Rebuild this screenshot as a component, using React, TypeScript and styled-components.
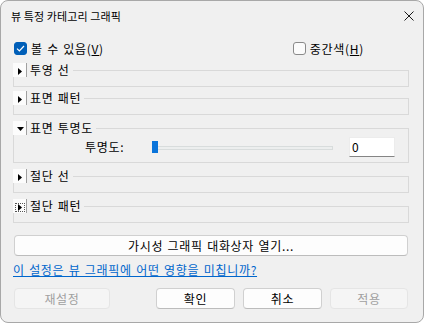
import React from 'react'
import styled, {createGlobalStyle} from 'styled-components'

const GlobalStyle = createGlobalStyle`
  html, body {
    margin: 0;
    padding: 0;
    background: #ffffff;
  }
  body {
    font-family: "Noto Sans CJK KR", "Noto Sans", sans-serif;
  }
`

const Window = styled.div`
  width: 424px;
  height: 323px;
  box-sizing: border-box;
  border: 1px solid #a8a8a8;
  border-radius: 8px;
  background: #f0f0f0;
  overflow: hidden;
  display: flex;
  flex-direction: column;
  font-family: "Noto Sans CJK KR", "Noto Sans", sans-serif;
  font-size: 12px;
  letter-spacing: 0.7px;
  word-spacing: 1px;
  color: #000;
`

const TitleBar = styled.div`
  height: 29px;
  flex: none;
  display: flex;
  align-items: center;
  justify-content: space-between;
  padding: 0 9px 0 10px;
`

const Title = styled.span`
  font-size: 11px;
  letter-spacing: 0.1px;
  word-spacing: 0;
  line-height: 14px;
`

const Body = styled.div`
  display: flex;
  flex-direction: column;
  padding: 0 14px 0 12px;
`

const TopRow = styled.div`
  display: flex;
  align-items: center;
  height: 13px;
  margin-top: 12px;
  padding-right: 45px;
`

const CheckLabel = styled.label<{$right?: boolean}>`
  display: flex;
  align-items: center;
  gap: 4px;
  line-height: 14px;
  margin-left: ${p => (p.$right ? 'auto' : '1px')};
`

const Box = styled.span<{$checked?: boolean}>`
  width: 13px;
  height: 13px;
  box-sizing: border-box;
  border-radius: 3px;
  display: flex;
  align-items: center;
  justify-content: center;
  background: ${p => (p.$checked ? '#005fb8' : '#fbfbfb')};
  border: 1px solid ${p => (p.$checked ? '#005fb8' : '#8a8a8a')};
`

const U = styled.span`
  text-decoration: underline;
`

const Group = styled.fieldset<{$gap: number}>`
  margin: ${p => p.$gap}px 0 0;
  padding: 0;
  min-width: 0;
  border: 1px solid #d9d9d9;
`

const Legend = styled.legend`
  margin-left: -1px;
  padding: 0 3px 0 0;
  height: 14px;
  display: flex;
  align-items: center;
  gap: 3px;
  line-height: 14px;
`

const Expander = styled.span`
  width: 14px;
  height: 14px;
  box-sizing: border-box;
  display: flex;
  align-items: center;
  justify-content: center;
  padding-left: 1px;
  background: #fcfcfc;
  border-right: 1px solid #a0a0a0;
`

const FocusRing = styled.span<{$on?: boolean}>`
  display: flex;
  align-items: center;
  justify-content: center;
  width: 10px;
  height: 9px;
  margin-top: 2px;
  box-sizing: border-box;
  border: 1px dotted ${p => (p.$on ? '#555' : 'transparent')};
`

const GroupBody = styled.div<{$h: number}>`
  height: ${p => p.$h}px;
`

const SliderRow = styled.div`
  display: flex;
  align-items: center;
  height: 20px;
  margin: 2px 0 5px;
  padding-left: 71px;
`

const SliderLabel = styled.span`
  width: 65px;
  line-height: 14px;
`

const Slider = styled.div`
  position: relative;
  width: 185px;
  height: 20px;
`

const Track = styled.div`
  position: absolute;
  left: 7px;
  right: 2px;
  top: 9px;
  height: 4px;
  box-sizing: border-box;
  border: 1px solid #d8dcdc;
  background: #eceeee;
`

const Thumb = styled.div`
  position: absolute;
  top: 4px;
  width: 6px;
  height: 12px;
  background: #0a74da;
`

const Edit = styled.div`
  margin-left: 14px;
  width: 46px;
  height: 20px;
  box-sizing: border-box;
  background: #fff;
  border: 1px solid #ececec;
  border-bottom-color: #858585;
  padding-left: 2px;
  line-height: 18px;
`

const WideButton = styled.button`
  margin: 12px 1px 0;
  height: 21px;
  box-sizing: border-box;
  padding: 0;
  border: 1px solid #d0d0d0;
  border-bottom-color: #bcbcbc;
  border-radius: 4px;
  background: #fdfdfd;
  font: inherit;
  font-size: 12px;
  letter-spacing: inherit;
  word-spacing: inherit;
  line-height: 19px;
  color: #000;
`

const Link = styled.a`
  margin-top: 6px;
  align-self: flex-start;
  color: #0066cc;
  text-decoration: underline;
  line-height: 16px;
`

const ButtonRow = styled.div`
  display: flex;
  gap: 8px;
  margin: 10px 1px 0;
`

const Button = styled.button<{$w: number}>`
  width: ${p => p.$w}px;
  height: 21px;
  box-sizing: border-box;
  padding: 0;
  border: 1px solid #d0d0d0;
  border-bottom-color: #bcbcbc;
  border-radius: 4px;
  background: #fdfdfd;
  font: inherit;
  font-size: 12px;
  letter-spacing: inherit;
  line-height: 19px;
  color: #000;
  &:disabled {
    background: #f5f5f5;
    border-color: #e5e5e5;
    color: #a0a0a0;
  }
`

const Spacer = styled.div`
  flex: 1;
`

const Tri = ({down}: {down?: boolean}) =>
  down ? (
    <svg width="7" height="4" viewBox="0 0 7 4">
      <polygon points="0,0 7,0 3.5,4" fill="#000" />
    </svg>
  ) : (
    <svg width="4" height="7" viewBox="0 0 4 7">
      <polygon points="0,0 4,3.5 0,7" fill="#000" />
    </svg>
  )

type GroupData = {label: string; open?: boolean; focused?: boolean; gap: number}

const groups: GroupData[] = [
  {label: '투영 선', gap: 8},
  {label: '표면 패턴', gap: 4},
  {label: '표면 투명도', open: true, gap: 6},
  {label: '절단 선', gap: 6},
  {label: '절단 패턴', focused: true, gap: 6},
]

export default function App() {
  const value = 0
  return (
    <>
      <GlobalStyle />
      <Window>
        <TitleBar>
          <Title>뷰 특정 카테고리 그래픽</Title>
          <svg width="10" height="10" viewBox="0 0 10 10">
            <path d="M0.5 0.5 L9.5 9.5 M9.5 0.5 L0.5 9.5" stroke="#1a1a1a" strokeWidth="1" />
          </svg>
        </TitleBar>
        <Body>
          <TopRow>
            <CheckLabel>
              <Box $checked>
                <svg width="9" height="7" viewBox="0 0 9 7">
                  <path d="M1 3.6 L3.4 6 L8 1" stroke="#fff" strokeWidth="1.2" fill="none" />
                </svg>
              </Box>
              <span>
                볼 수 있음(<U>V</U>)
              </span>
            </CheckLabel>
            <CheckLabel $right>
              <Box />
              <span>
                중간색(<U>H</U>)
              </span>
            </CheckLabel>
          </TopRow>

          {groups.map(g => (
            <Group key={g.label} $gap={g.gap}>
              <Legend>
                <Expander>
                  <FocusRing $on={g.focused}>
                    <Tri down={g.open} />
                  </FocusRing>
                </Expander>
                <span>{g.label}</span>
              </Legend>
              {g.open ? (
                <SliderRow>
                  <SliderLabel>투명도:</SliderLabel>
                  <Slider>
                    <Track />
                    <Thumb style={{left: 2 + (value / 100) * 175}} />
                  </Slider>
                  <Edit>{value}</Edit>
                </SliderRow>
              ) : (
                <GroupBody $h={9} />
              )}
            </Group>
          ))}

          <WideButton>가시성 그래픽 대화상자 열기...</WideButton>
          <Link>이 설정은 뷰 그래픽에 어떤 영향을 미칩니까?</Link>
          <ButtonRow>
            <Button $w={96} disabled>
              재설정
            </Button>
            <Spacer />
            <Button $w={79}>확인</Button>
            <Button $w={79}>취소</Button>
            <Button $w={78} disabled>
              적용
            </Button>
          </ButtonRow>
        </Body>
      </Window>
    </>
  )
}
